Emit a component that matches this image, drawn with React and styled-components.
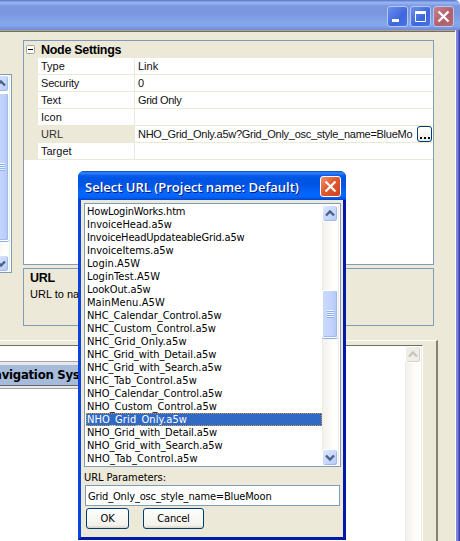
import React from 'react';
import styled, { createGlobalStyle, css } from 'styled-components';

const Global = createGlobalStyle`
  * { box-sizing: border-box; }
  body { margin: 0; overflow: hidden; }
`;

const arial = '"Liberation Sans", Arial, sans-serif';
const tahoma = 'Tahoma, "DejaVu Sans Condensed", "DejaVu Sans", sans-serif';
const face = '#ece9d8';
const edge = '#7f9db9';

const Screen = styled.div`
  position: relative;
  width: 460px;
  height: 541px;
  overflow: hidden;
  display: flex;
  flex-direction: column;
  background: #fff;
  color: #000;
  font: 11px/16px ${arial};
`;

const TitleBar = styled.header`
  flex: none;
  height: 30px;
  padding: 6px 6px 0 0;
  display: flex;
  justify-content: flex-end;
  gap: 2px;
  border-top-right-radius: 5px;
  background: linear-gradient(#6480d4 0, #6480d4 1px, #9ab6f0 2px, #8eaceb 4px, #7a96df 6px, #7a96df 13px, #83a7ea 23px, #82a5ea 26px, #748fdb 29px, #7389d8 30px);
`;

const Caption = styled.span`
  width: 21px;
  height: 21px;
  border: 1px solid ${(p) => (p.$hot ? '#fff' : '#b5c7f2')};
  border-radius: 3px;
  background: ${(p) => p.$bg};
  svg { display: block; }
`;

const Body = styled.div`
  flex: 1;
  display: flex;
  min-height: 0;
`;

const Client = styled.main`
  flex: 1;
  min-width: 0;
  display: flex;
  flex-direction: column;
  border-top: 1px solid #aca08e;
  border-right: 1px solid #fff;
  background: ${face};
  box-shadow: inset 0 1px #716f64;
`;

const Frame = styled.div`
  width: 4px;
  background: linear-gradient(90deg, #7a85dc 0 2px, #5a5fc8 2px 3px, #3f3fae 3px);
`;

const Upper = styled.div`
  flex: none;
  height: 309px;
  display: flex;
  gap: 11px;
`;

const TreeBox = styled.div`
  width: 12px;
  height: 199px;
  margin-top: 43px;
  padding-right: 1px;
  border: solid ${edge};
  border-width: 1px 1px 1px 0;
  background: #fff;
  display: flex;
  flex-direction: column;
  overflow: hidden;
  align-items: flex-end;
`;

const Panels = styled.div`
  width: 411px;
  padding-top: 9px;
  display: flex;
  flex-direction: column;
  gap: 3px;
`;

const Grid = styled.section`
  height: 225px;
  border: 1px solid ${edge};
  background: #fff;
`;

const GridHead = styled.div`
  height: 17px;
  padding-left: 2px;
  display: flex;
  align-items: center;
  gap: 6px;
  background: ${face};
  font-weight: bold;
  font-size: 12.5px;
  letter-spacing: -0.3px;
`;

const Row = styled.div`
  height: 17px;
  padding-left: 14px;
  display: grid;
  grid-template-columns: 97px minmax(0, 1fr);
  background: ${face};
`;

const Cell = styled.div`
  padding-left: 3px;
  display: flex;
  justify-content: space-between;
  white-space: nowrap;
  border-bottom: 1px solid ${face};
  border-right: ${(p) => (p.$label ? `1px solid ${face}` : 0)};
  background: ${(p) => (p.$active ? face : '#fff')};
  color: ${(p) => (p.$active ? '#333' : '#111')};
`;

const Letters = styled.span`
  letter-spacing: ${(p) => p.$track || 0}px;
`;

const Ellipsis = styled.span`
  flex: none;
  width: 15px;
  height: 16px;
  margin-right: 1px;
  border: 1px solid #003c74;
  border-radius: 3px;
  background: linear-gradient(#fff, #ecebe5);
  display: flex;
  justify-content: center;
  align-items: flex-end;
  gap: 2px;
  padding-bottom: 2px;
`;

const Dot = styled.i`
  width: 2px;
  height: 2px;
  background: #000;
`;

const Description = styled.section`
  height: 58px;
  padding: 2px 6px;
  border: 1px solid ${edge};
`;

const DescTitle = styled.div`
  font-weight: bold;
  font-size: 12.5px;
  line-height: 15px;
  letter-spacing: -0.3px;
`;

const Lower = styled.div`
  flex: 1;
  width: 438px;
  padding-right: 13px;
  border-top: 1px solid #fff;
  border-right: 2px solid #85826f;
  display: flex;
`;

const Preview = styled.div`
  flex: 1;
  margin-top: 4px;
  display: flex;
  justify-content: space-between;
  border-top: 1px solid #716f64;
  border-right: 1px solid #fff;
  background: #fff;
`;

const Banner = styled.div`
  width: 110px;
  height: 28px;
  margin-top: 15px;
  padding: 3px 0 2px;
  border: solid #a4a4a8;
  border-width: 1px 0;
  background: #e8e8ec;
`;

const BannerText = styled.div`
  height: 21px;
  margin-left: -6px;
  background: #a5bbd9;
  border-bottom: 1px solid #666;
  font: bold 13px/20px ${tahoma};
  letter-spacing: -0.25px;
  white-space: nowrap;
`;

const Track = styled.div`
  width: 17px;
  flex: ${(p) => (p.$fill ? 1 : 'none')};
  display: flex;
  flex-direction: column;
  border-left: 1px solid #eeede5;
  border-right: 1px solid #eeede5;
  background: linear-gradient(90deg, #f3f1ec, #fefefb 70%);
`;

const ArrowBox = styled.div`
  flex: none;
  width: 16px;
  height: 17px;
  margin-left: -1px;
  border: 1px solid #fff;
  border-radius: 3px;
  box-shadow: inset -1px -1px ${(p) => (p.$off ? '#d5d3c4' : '#a1b9e9')};
  background: ${(p) => (p.$off ? '#efeee8' : 'linear-gradient(135deg, #dce7fe, #b5caf8)')};
  svg { display: block; }
`;

const Thumb = styled.div`
  flex: none;
  width: 16px;
  height: ${(p) => p.$h}px;
  margin: ${(p) => p.$top}px 0 ${(p) => p.$bottom}px -1px;
  display: flex;
  align-items: center;
  justify-content: center;
  border: 1px solid #fff;
  border-radius: 2px;
  box-shadow: inset -1px -1px #a1b9e9, 0 1px #8fade5;
  background: linear-gradient(90deg, #cad8fc, #c2d3fc 60%, #b2c7f7);
`;

const Grip = styled.i`
  width: 7px;
  height: 8px;
  background: repeating-linear-gradient(#eef4fe 0 1px, #8cb0f8 1px 2px);
`;

const Dialog = styled.section`
  position: absolute;
  left: 78px;
  top: 171px;
  width: 268px;
  height: 369px;
  display: flex;
  flex-direction: column;
  border: solid;
  border-width: 0 3px 3px;
  border-radius: 6px 6px 0 0;
  border-color: #0831d9 #0019a8 #0019a8 #0842e0;
  background: ${face};
  font: 11px/13px ${tahoma};
  font-stretch: condensed;
`;

const DialogTitle = styled.header`
  flex: none;
  height: 29px;
  margin: 0 -3px;
  padding: 5px 5px 0 7px;
  display: flex;
  justify-content: space-between;
  border-radius: 6px 6px 0 0;
  color: #fff;
  font: 600 13px/22px "Open Sans", "Noto Sans", sans-serif;
  text-shadow: 1px 1px #0a1883;
  white-space: nowrap;
  background: linear-gradient(#0843c5 0, #3889fb 2px, #0a63f0 4px, #0054e3 7px, #0055e5 14px, #0367fd 22px, #0364fa 26px, #0144cc 29px);
`;

const ListBox = styled.div`
  width: 257px;
  height: 264px;
  margin: 3px 0 0 3px;
  border: 1px solid ${edge};
  padding: 1px;
  display: flex;
  background: #fff;
`;

const Items = styled.div`
  flex: 1;
  min-width: 0;
`;

const Item = styled.div`
  height: 13px;
  padding-left: 1px;
  white-space: nowrap;
  letter-spacing: ${(p) => p.$track}px;
  ${(p) => p.$selected && css`
    background: #316ac5;
    color: #fff;
    outline: 1px dotted #ce953a;
    outline-offset: -1px;
  `}
`;

const Label = styled.label`
  margin: 4px 0 1px 3px;
  height: 13px;
  letter-spacing: -0.05px;
`;

const Field = styled.div`
  flex: none;
  width: 255px;
  height: 21px;
  margin: 0 0 0 4px;
  padding: 4px 2px;
  border: 1px solid ${edge};
  background: #fff;
  letter-spacing: -0.16px;
`;

const Buttons = styled.div`
  display: flex;
  gap: 14px;
  padding: 2px 0 0 5px;
`;

const Button = styled.button`
  width: ${(p) => p.$w}px;
  height: 21px;
  padding: 0;
  border: 1px solid #003c74;
  border-radius: 3px;
  background: linear-gradient(#fff, #f3f2ec 85%, #d9d4c8);
  color: #000;
  font: inherit;
  letter-spacing: -0.2px;
`;

const Arrow = ({ up, off }) => (
  <svg width="14" height="15" viewBox="0 0 14 15">
    <path d={up ? 'M3 9.5 L7 5.5 L11 9.5' : 'M3 5.5 L7 9.5 L11 5.5'} fill="none" stroke={off ? '#c9c7ba' : '#4d6185'} strokeWidth="2.4" />
  </svg>
);

const Cross = () => (
  <svg width="19" height="19" viewBox="0 0 19 19">
    <path d="M4.5 4.5 L14.5 14.5 M14.5 4.5 L4.5 14.5" stroke="#fff" strokeWidth="2.3" />
  </svg>
);

const blue = 'linear-gradient(135deg, #6b8ff0, #3f67dd 60%, #4a74e8)';

const settings = [
  ['Type', 'Link', 0],
  ['Security', '0', 0],
  ['Text', 'Grid Only', -0.35],
  ['Icon', '', 0],
  ['URL', 'NHO_Grid_Only.a5w?Grid_Only_osc_style_name=BlueMo', -0.27],
  ['Target', '', 0],
];

const files = [
  ['HowLoginWorks.htm', -0.18],
  ['InvoiceHead.a5w', 0],
  ['InvoiceHeadUpdateableGrid.a5w', -0.18],
  ['InvoiceItems.a5w', 0],
  ['Login.A5W', 0.05],
  ['LoginTest.A5W', 0.08],
  ['LookOut.a5w', -0.1],
  ['MainMenu.A5W', 0.08],
  ['NHC_Calendar_Control.a5w', -0.04],
  ['NHC_Custom_Control.a5w', 0],
  ['NHC_Grid_Only.a5w', 0.15],
  ['NHC_Grid_with_Detail.a5w', -0.08],
  ['NHC_Grid_with_Search.a5w', -0.05],
  ['NHC_Tab_Control.a5w', 0.12],
  ['NHO_Calendar_Control.a5w', -0.04],
  ['NHO_Custom_Control.a5w', 0],
  ['NHO_Grid_Only.a5w', 0.12],
  ['NHO_Grid_with_Detail.a5w', -0.08],
  ['NHO_Grid_with_Search.a5w', -0.05],
  ['NHO_Tab_Control.a5w', 0.12],
];

export default function App() {
  return (
    <Screen>
      <Global />
      <TitleBar>
        <Caption $bg={blue}>
          <svg width="19" height="19"><rect x="4" y="12" width="7" height="3" fill="#fff" /></svg>
        </Caption>
        <Caption $bg={blue}>
          <svg width="19" height="19"><path d="M4.5 5 V14.5 H14.5 V5" fill="none" stroke="#fff" /><rect x="4" y="4" width="11" height="3" fill="#fff" /></svg>
        </Caption>
        <Caption $bg="linear-gradient(135deg, #c87f8c, #b0606c 60%, #b86a70)"><Cross /></Caption>
      </TitleBar>
      <Body>
        <Client>
          <Upper>
            <TreeBox>
              <Track $fill>
                <ArrowBox><Arrow up /></ArrowBox>
                <Thumb $h={148} $top={1} $bottom={14}><Grip /></Thumb>
                <ArrowBox><Arrow /></ArrowBox>
              </Track>
            </TreeBox>
            <Panels>
              <Grid>
                <GridHead>
                  <svg width="9" height="9"><rect x=".5" y=".5" width="8" height="8" rx="1" fill="#fff" stroke="#a7a498" /><path d="M2 4.5 H7" stroke="#000" /></svg>
                  Node Settings
                </GridHead>
                {settings.map(([name, value, track]) => (
                  <Row key={name}>
                    <Cell $label $active={name === 'URL'}>
                      <Letters $track={name === 'Security' ? -0.2 : 0}>{name}</Letters>
                    </Cell>
                    <Cell>
                      <Letters $track={track}>{value}</Letters>
                      {name === 'URL' && <Ellipsis><Dot /><Dot /><Dot /></Ellipsis>}
                    </Cell>
                  </Row>
                ))}
              </Grid>
              <Description>
                <DescTitle>URL</DescTitle>
                <Letters>URL to na</Letters>
              </Description>
            </Panels>
          </Upper>
          <Lower>
            <Preview>
              <Banner><BannerText>avigation Sys</BannerText></Banner>
              <Track><ArrowBox $off><Arrow up off /></ArrowBox></Track>
            </Preview>
          </Lower>
        </Client>
        <Frame />
      </Body>
      <Dialog>
        <DialogTitle>
          <span>Select URL (Project name: Default)</span>
          <Caption $hot $bg="linear-gradient(135deg, #f0906c, #e25a30 45%, #d0401a)"><Cross /></Caption>
        </DialogTitle>
        <ListBox>
          <Items>
            {files.map(([f, track]) => <Item key={f} $track={track} $selected={f === 'NHO_Grid_Only.a5w'}>{f}</Item>)}
          </Items>
          <Track>
            <ArrowBox><Arrow up /></ArrowBox>
            <Thumb $h={48} $top={68} $bottom={111}><Grip /></Thumb>
            <ArrowBox><Arrow /></ArrowBox>
          </Track>
        </ListBox>
        <Label>URL Parameters:</Label>
        <Field>Grid_Only_osc_style_name=BlueMoon</Field>
        <Buttons>
          <Button $w={43}>OK</Button>
          <Button $w={61}>Cancel</Button>
        </Buttons>
      </Dialog>
    </Screen>
  );
}
